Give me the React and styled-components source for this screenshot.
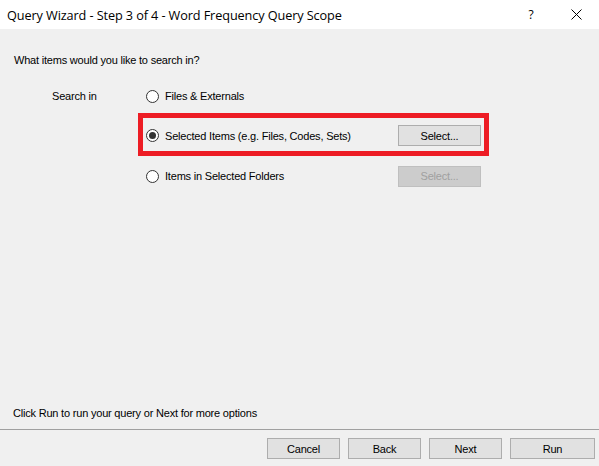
import React from "react";
import styled, { createGlobalStyle } from "styled-components";

const GlobalStyle = createGlobalStyle`
  html, body {
    margin: 0;
    padding: 0;
    background: #f0f0f0;
  }
`;

const Window = styled.div`
  width: 599px;
  height: 466px;
  display: flex;
  flex-direction: column;
  font-family: "Liberation Sans", Arial, sans-serif;
  font-size: 11px;
  letter-spacing: -0.2px;
  color: #000;
  background: #f0f0f0;
  overflow: hidden;
`;

const TitleBar = styled.div`
  height: 29px;
  flex: none;
  background: #fff;
  display: flex;
  align-items: center;
  padding-left: 7px;
`;

const Title = styled.div`
  flex: 1;
  font-family: "Open Sans", "Noto Sans", sans-serif;
  font-size: 12.7px;
  letter-spacing: -0.1px;
`;

const TitleButton = styled.div`
  width: ${(p) => p.$w}px;
  height: 29px;
  display: flex;
  align-items: center;
  justify-content: center;
  font-family: "Open Sans", "Noto Sans", sans-serif;
  font-size: 12px;
`;

const Body = styled.div`
  flex: 1;
  display: flex;
  flex-direction: column;
  padding: 24px 0 0 14px;
`;

const Question = styled.div`
  line-height: 14px;
  height: 14px;
`;

const SearchArea = styled.div`
  display: flex;
  margin-top: 9px;
`;

const SearchLabel = styled.div`
  width: 86px;
  padding-left: 38px;
  height: 40px;
  display: flex;
  align-items: center;
  flex: none;
`;

const Options = styled.div`
  display: flex;
  flex-direction: column;
  width: 351px;
`;

const Option = styled.div`
  box-sizing: border-box;
  display: flex;
  align-items: center;
  height: ${(p) => (p.$highlight ? 43 : 40)}px;
  margin-top: ${(p) => (p.$highlight ? -3 : 0)}px;
  padding: ${(p) => (p.$highlight ? "2px 3px 0" : "0 3px")};
  border: 5px solid ${(p) => (p.$highlight ? "#ed1c24" : "transparent")};
`;

const Radio = styled.span`
  box-sizing: border-box;
  width: 13px;
  height: 13px;
  border-radius: 50%;
  border: 1px solid #333;
  background: #fff;
  display: flex;
  align-items: center;
  justify-content: center;
  flex: none;
  &::after {
    content: "";
    width: 7px;
    height: 7px;
    border-radius: 50%;
    background: ${(p) => (p.$checked ? "#333" : "transparent")};
  }
`;

const OptionText = styled.span`
  margin-left: 6px;
  flex: 1;
`;

const Button = styled.button`
  box-sizing: border-box;
  width: ${(p) => p.$w || 73}px;
  height: 21px;
  flex: none;
  padding: 0;
  border: 1px solid ${(p) => (p.disabled ? "#bfbfbf" : "#adadad")};
  background: ${(p) => (p.disabled ? "#cccccc" : "#e1e1e1")};
  color: ${(p) => (p.disabled ? "#a0a0a0" : "#000")};
  font-family: "Liberation Sans", Arial, sans-serif;
  font-size: 11px;
  letter-spacing: -0.2px;
`;

const Spacer = styled.div`
  flex: 1;
`;

const Hint = styled.div`
  line-height: 14px;
  margin: 0 0 9px -1px;
`;

const Footer = styled.div`
  height: 37px;
  flex: none;
  box-sizing: border-box;
  border-top: 1px solid #a0a0a0;
  display: flex;
  justify-content: flex-end;
  align-items: flex-start;
  gap: 8px;
  padding: 8px 4px 0 0;
`;

function CloseIcon() {
  return (
    <svg width="11" height="11" viewBox="0 0 11 11">
      <path d="M0.5 0.5 L10.5 10.5 M10.5 0.5 L0.5 10.5" stroke="#000" strokeWidth="1" />
    </svg>
  );
}

export default function App() {
  return (
    <Window>
      <GlobalStyle />
      <TitleBar>
        <Title>Query Wizard - Step 3 of 4 - Word Frequency Query Scope</Title>
        <TitleButton $w={46}>?</TitleButton>
        <TitleButton $w={45}>
          <CloseIcon />
        </TitleButton>
      </TitleBar>
      <Body>
        <Question>What items would you like to search in?</Question>
        <SearchArea>
          <SearchLabel>Search in</SearchLabel>
          <Options>
            <Option>
              <Radio />
              <OptionText>Files &amp; Externals</OptionText>
            </Option>
            <Option $highlight>
              <Radio $checked />
              <OptionText>Selected Items (e.g. Files, Codes, Sets)</OptionText>
              <Button $w={83}>Select...</Button>
            </Option>
            <Option>
              <Radio />
              <OptionText>Items in Selected Folders</OptionText>
              <Button $w={83} disabled>
                Select...
              </Button>
            </Option>
          </Options>
        </SearchArea>
        <Spacer />
        <Hint>Click Run to run your query or Next for more options</Hint>
      </Body>
      <Footer>
        <Button>Cancel</Button>
        <Button>Back</Button>
        <Button>Next</Button>
        <Button $w={85}>Run</Button>
      </Footer>
    </Window>
  );
}
